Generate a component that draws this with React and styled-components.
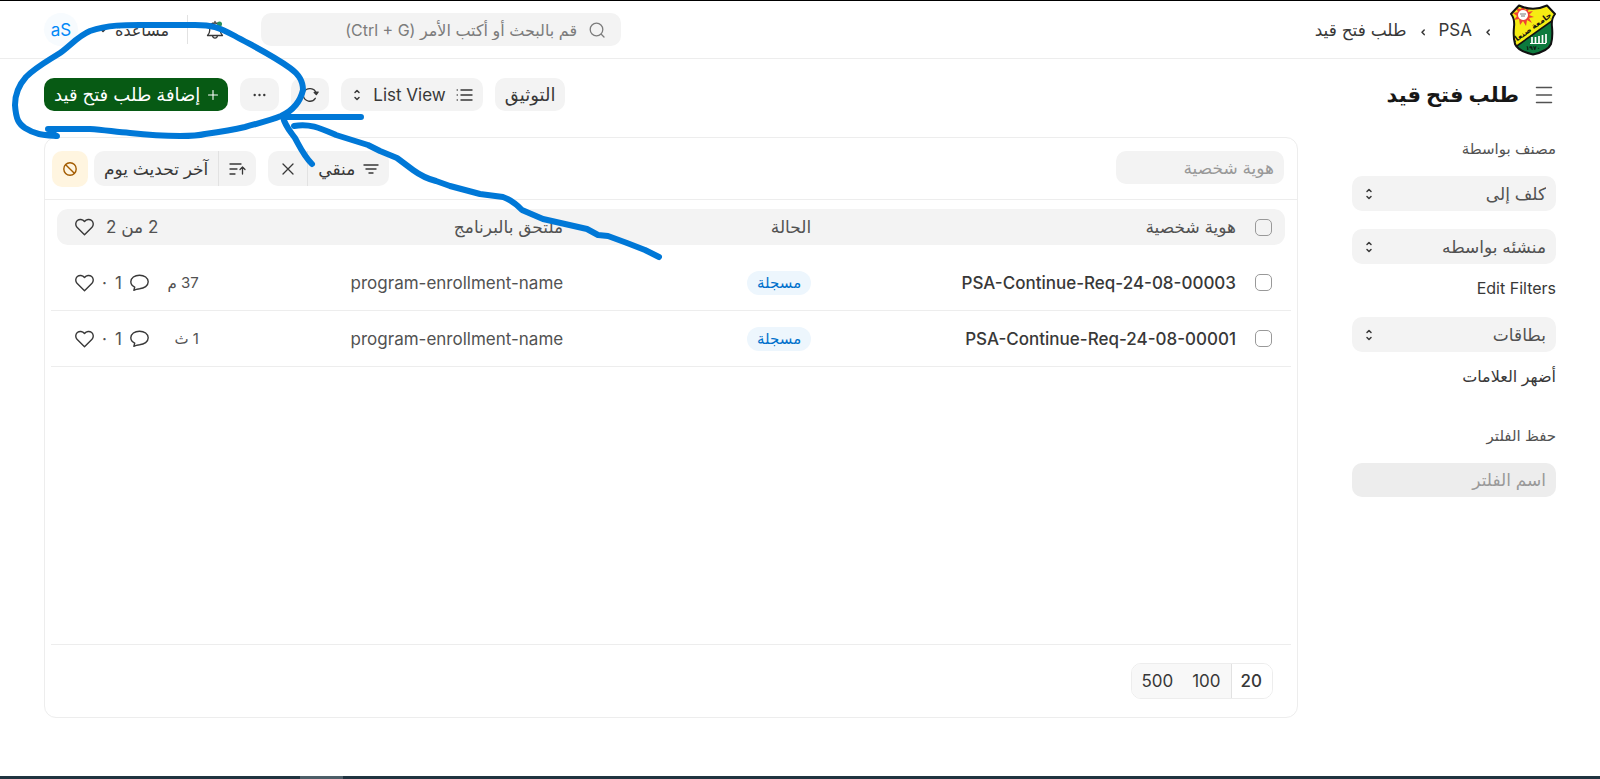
import React from "react";
import styled, { createGlobalStyle } from "styled-components";

const GlobalStyle = createGlobalStyle`
  *, *::before, *::after { box-sizing: border-box; }
  body {
    margin: 0;
    background: #fff;
    color: #383838;
    font-family: Inter, "DejaVu Sans", sans-serif;
    font-size: 17px;
    line-height: 24px;
  }
  button, input, select { font: inherit; color: inherit; }
  a { color: inherit; text-decoration: none; }
`;

const Page = styled.div`
  position: relative;
  min-height: 100vh;
  display: flex;
  flex-direction: column;
  border-top: 1px solid #000;
`;

const Icon = styled.svg`
  width: ${(p) => p.$w || 18}px;
  height: ${(p) => p.$h || p.$w || 18}px;
  flex: none;
  display: block;
  fill: none;
  stroke: currentColor;
  stroke-width: ${(p) => p.$stroke || 1.3};
  stroke-linecap: round;
  stroke-linejoin: round;
`;

/* ---------- top bar ---------- */

const TopBar = styled.header`
  height: 58px;
  padding: 0 44px;
  display: flex;
  align-items: center;
  justify-content: space-between;
  border-bottom: 1px solid #ededed;
`;

const Crumbs = styled.nav`
  display: flex;
  align-items: center;
  gap: 14px;
`;

const HomeLink = styled.a`
  display: flex;
  margin-inline-end: 6px;
`;

const CrumbText = styled.a`
  color: #383838;
`;

const TopTools = styled.div`
  display: flex;
  align-items: center;
`;

const SearchBox = styled.label`
  width: 360px;
  height: 33px;
  padding: 0 16px;
  display: flex;
  align-items: center;
  gap: 12px;
  border-radius: 10px;
  background: #f3f3f3;
  color: #7c7c7c;
  input {
    flex: 1;
    min-width: 0;
    padding: 0;
    border: 0;
    outline: 0;
    background: none;
    font-size: 16px;
  }
  input::placeholder { color: #7c7c7c; opacity: 1; }
`;

const PlainButton = styled.button`
  padding: 0;
  border: 0;
  background: none;
  display: flex;
  align-items: center;
  gap: 8px;
  font-size: 16px;
  cursor: pointer;
`;

const BellButton = styled(PlainButton)`
  margin-inline-start: 37px;
`;

const Separator = styled.span`
  width: 1px;
  height: 29px;
  margin: 0 18px;
  background: #e2e2e2;
`;

const Avatar = styled.button`
  width: 34px;
  height: 33px;
  margin-inline-start: 21px;
  padding: 0;
  border: 0;
  border-radius: 50%;
  background: #f7fbfe;
  color: #0289f7;
  font-size: 17px;
  cursor: pointer;
`;

/* ---------- page head ---------- */

const PageHead = styled.div`
  padding: 19px 44px 26px;
  display: flex;
  align-items: center;
  justify-content: space-between;
`;

const TitleGroup = styled.div`
  display: flex;
  align-items: center;
  gap: 16px;
  padding-inline-start: 3px;
`;

const Title = styled.h1`
  margin: 0;
  font-size: 21px;
  line-height: 32px;
  font-weight: 700;
  color: #171717;
`;

const Actions = styled.div`
  display: flex;
  gap: 12px;
`;

const Button = styled.button`
  height: ${(p) => p.$height || 33}px;
  min-width: ${(p) => p.$min || 0}px;
  padding: 0 10px;
  display: flex;
  align-items: center;
  justify-content: center;
  gap: ${(p) => p.$gap || 10}px;
  border: 0;
  border-radius: 10px;
  background: ${(p) => (p.$tone === "primary" ? "#075a14" : p.$tone === "amber" ? "#fff5e0" : "#f3f3f3")};
  color: ${(p) => (p.$tone === "primary" ? "#fff" : p.$tone === "amber" ? "#a35c00" : "#383838")};
  font-size: ${(p) => (p.$large ? 18 : 17)}px;
  white-space: nowrap;
  cursor: pointer;
`;

/* ---------- body ---------- */

const Body = styled.div`
  flex: 1;
  padding: 0 44px;
  display: flex;
  align-items: flex-start;
  gap: 54px;
`;

const Sidebar = styled.aside`
  flex: none;
  width: 204px;
  display: flex;
  flex-direction: column;
`;

const SideLabel = styled.label`
  font-size: 15px;
  color: #525252;
  margin-bottom: 15px;
`;

const SelectBox = styled.div`
  display: flex;
  align-items: center;
  margin-bottom: ${(p) => p.$gap || 12}px;
  border-radius: 10px;
  background: #f3f3f3;
  select {
    flex: 1;
    width: 100%;
    height: 35px;
    padding: 0 10px;
    border: 0;
    border-radius: 10px;
    background: none;
    appearance: none;
    color: #525252;
  }
  svg { margin-inline: -26px 13px; pointer-events: none; }
`;

const SideLink = styled.a`
  font-size: 16px;
  margin-bottom: ${(p) => p.$gap}px;
`;

const Field = styled.input`
  width: ${(p) => p.$width || "100%"};
  height: ${(p) => p.$height || 33}px;
  padding: 0 10px;
  border: 0;
  border-radius: 10px;
  background: ${(p) => p.$bg || "#f3f3f3"};
  &::placeholder { color: #999; opacity: 1; }
`;

const Card = styled.main`
  flex: 1;
  min-width: 0;
  display: flex;
  flex-direction: column;
  border: 1px solid #ededed;
  border-radius: 12px;
`;

const FilterBar = styled.div`
  padding: 13px 13px 12px 7px;
  display: flex;
  align-items: flex-start;
  justify-content: space-between;
  border-bottom: 1px solid #ededed;
`;

const FilterTools = styled.div`
  display: flex;
  align-items: flex-start;
`;

const Split = styled.div`
  display: flex;
  margin-inline-end: ${(p) => p.$gap}px;
  button:first-child { border-start-end-radius: 0; border-end-end-radius: 0; }
  button:last-child {
    border-start-start-radius: 0;
    border-end-start-radius: 0;
    border-inline-start: 1px solid #e2e2e2;
  }
`;

const List = styled.div`
  min-height: 436px;
  margin: 9px 6px 0;
  border-bottom: 1px solid #ededed;
`;

const Table = styled.table`
  width: 100%;
  table-layout: fixed;
  border-collapse: separate;
  border-spacing: 0;
  th, td { padding: 0; text-align: start; vertical-align: middle; }
`;

const HeadCell = styled.th`
  height: 36px;
  font-weight: 400;
  color: #525252;
  background: #f3f3f3;
  background-clip: padding-box;
  &:first-child {
    border-inline-start: 6px solid transparent;
    border-start-start-radius: 17px 11px;
    border-end-start-radius: 17px 11px;
  }
  &:last-child {
    border-inline-end: 6px solid transparent;
    border-start-end-radius: 17px 11px;
    border-end-end-radius: 17px 11px;
  }
`;

const Spacer = styled.tr`
  height: 10px;
`;

const Cell = styled.td`
  height: 56px;
  border-bottom: 1px solid #ededed;
  font-weight: ${(p) => (p.$strong ? 500 : 400)};
  color: ${(p) => (p.$strong ? "#383838" : "#525252")};
  white-space: nowrap;
`;

const Check = styled.input.attrs({ type: "checkbox" })`
  appearance: none;
  display: block;
  width: 17px;
  height: 17px;
  margin: 0;
  margin-inline-start: ${(p) => p.$indent}px;
  border: 1px solid #999;
  border-radius: 5px;
  background: #fff0;
  &:checked { background: #383838; }
`;

const Pill = styled.span`
  display: inline-block;
  padding: 0 10px;
  border-radius: 12px;
  background: #edf6fd;
  color: #0070cc;
  font-size: 15px;
`;

const Activity = styled.div`
  padding-inline-end: ${(p) => p.$end}px;
  display: flex;
  align-items: center;
  justify-content: flex-end;
  gap: ${(p) => p.$gap}px;
  color: #525252;
  svg { color: #383838; }
`;

const Age = styled.time`
  min-width: 32px;
  margin-inline-end: 10px;
  font-size: 15px;
`;

const Footer = styled.div`
  padding: 18px 24px;
  display: flex;
`;

const Pager = styled.div`
  display: flex;
  border: 1px solid #ededed;
  border-radius: 10px;
  overflow: hidden;
`;

const PageSize = styled.button`
  height: 34px;
  padding: 0 10px 0 9px;
  border: 0;
  border-inline-end: ${(p) => (p.$active ? "1px solid #e2e2e2" : "0")};
  background: ${(p) => (p.$active ? "#fff" : "#f8f8f8")};
  font-weight: ${(p) => (p.$active ? 500 : 400)};
  cursor: pointer;
`;

const Dock = styled.div`
  height: 3px;
  display: flex;
  justify-content: flex-end;
  background: #203440;
`;

const DockItem = styled.span`
  width: 43px;
  margin-inline-end: 300px;
  background: #4d5e68;
`;

const Ink = styled.svg`
  position: absolute;
  top: -1px;
  left: 0;
  width: 680px;
  height: 270px;
  pointer-events: none;
  fill: none;
  stroke: #0078d7;
  stroke-width: 6;
  stroke-linecap: round;
  stroke-linejoin: round;
`;

/* ---------- icons ---------- */

const SHIELD =
  "M9 1.500 Q23 8 37 1.500 L45 10 Q41 15 42 23 Q43 33 41 40 Q38 47 23 50.500 Q8 47 5 40 Q3 33 4 23 Q5 15 1 10 Z";

const Logo = () => (
  <svg width="46" height="52" viewBox="0 0 46 52" role="img" aria-label="جامعة صنعاء">
    <defs>
      <clipPath id="shield"><path d={SHIELD} /></clipPath>
    </defs>
    <g clipPath="url(#shield)">
      <rect width="46" height="52" fill="#f6ec13" />
      <path d="M46 14 L4 44 L10 52 H46 Z" fill="#0d7a3e" />
      <path d="M46 14 L4 44" stroke="#111" strokeWidth="1.600" />
      <path d="M13 1l2 5 4-3-1 5 5-1-4 4 5 2-5 1 3 5-5-3-1 6-3-5-3 4-1-6-5 1 3-4-4-3 5-1-2-4 5 1z" fill="#ee4035" />
      <circle cx="13" cy="11" r="5" fill="#fff" />
      <path d="M10 10h6M11 12h4" stroke="#777" strokeWidth="1" />
      <text x="23" y="26" fontSize="8" fontWeight="700" fill="#111" textAnchor="middle" transform="rotate(-36 23 26)">جامعة صنعاء</text>
      <path d="M22 33v6M25.500 33v6M29 32v7M32.500 31v8M36 30v9" stroke="#fff" strokeWidth="1.700" />
      <path d="M20 39.500h16" stroke="#fff" strokeWidth="1" />
      <text x="23" y="46" fontSize="6" fontWeight="700" fill="#111" textAnchor="middle">١٩٧٠</text>
    </g>
    <path d={SHIELD} fill="none" stroke="#111" strokeWidth="2" strokeLinejoin="round" />
  </svg>
);

const CrumbArrow = () => (
  <Icon $w={4} $h={12} $stroke={1.5} viewBox="0 0 4 12"><path d="M3.200 6 1 8.300 3.200 10.600" /></Icon>
);
const UpDown = () => (
  <Icon $w={8} $h={12} $stroke={1.5} viewBox="0 0 8 12"><path d="M2 3.500 4 1.500l2 2M2 8.500l2 2 2-2" /></Icon>
);
const Heart = () => (
  <Icon $w={19} $h={18} $stroke={1.400} viewBox="0 0 19 18">
    <path d="M9.500 16.700 2 9.200C.2 7.200.4 4.200 2.300 2.500 4.300 1 7.600 1 9.500 3.500 11.400 1 14.700 1 16.700 2.500c1.900 1.700 2.100 4.700.3 6.700z" />
  </Icon>
);
const Comment = () => (
  <Icon $w={19} $h={18} $stroke={1.400} viewBox="0 0 19 18">
    <path d="M9.500 1.200c4.800 0 8.700 2.700 8.700 6.600s-3.900 6.700-8.700 6.900c-1.500 0-3 .8-5.600 1.500l.8-3C2.300 12 .8 10.200.8 7.800c0-3.900 3.900-6.600 8.700-6.600z" />
  </Icon>
);

const rows = [
  { id: "PSA-Continue-Req-24-08-00003", status: "مسجلة", program: "program-enrollment-name", age: "37 م", comments: 1 },
  { id: "PSA-Continue-Req-24-08-00001", status: "مسجلة", program: "program-enrollment-name", age: "1 ث", comments: 1 },
];

const SideSelect = ({ label, gap }) => (
  <SelectBox $gap={gap}>
    <select aria-label={label} defaultValue="">
      <option value="">{label}</option>
    </select>
    <UpDown />
  </SelectBox>
);

export default function App() {
  return (
    <Page dir="rtl" lang="ar">
      <GlobalStyle />
      <TopBar>
        <Crumbs aria-label="مسار التنقل">
          <HomeLink href="#home"><Logo /></HomeLink>
          <CrumbArrow />
          <CrumbText href="#psa">PSA</CrumbText>
          <CrumbArrow />
          <CrumbText href="#list">طلب فتح قيد</CrumbText>
        </Crumbs>
        <TopTools>
          <SearchBox>
            <Icon $w={16} viewBox="0 0 16 16"><circle cx="7.500" cy="7.500" r="6.300" /><path d="m12.500 12.500 2.500 2.500" /></Icon>
            <input aria-label="بحث" placeholder="قم بالبحث أو أكتب الأمر (Ctrl + G)" />
          </SearchBox>
          <BellButton aria-label="الإشعارات">
            <Icon $w={18} $h={20} viewBox="0 0 18 20">
              <path d="M1.500 15.500h15c-1.500-1.500-2.200-2.700-2.200-5V8c0-3-2.200-5-5.300-5S3.700 5 3.700 8v2.500c0 2.300-.7 3.500-2.200 5zM9 3V1.500M6.500 15.500c.3 3.400 4.700 3.400 5 0" />
              <circle cx="13.500" cy="4" r="2.500" fill="#278f5e" stroke="none" />
            </Icon>
          </BellButton>
          <Separator />
          <PlainButton>
            مساعدة
            <Icon $w={8} $h={6} $stroke={1.500} viewBox="0 0 8 6"><path d="M1 1.500 4 4.500l3-3" /></Icon>
          </PlainButton>
          <Avatar>aS</Avatar>
        </TopTools>
      </TopBar>

      <PageHead>
        <TitleGroup>
          <PlainButton aria-label="القائمة الجانبية">
            <Icon $w={18} $stroke={1.500} viewBox="0 0 18 18" color="#525252"><path d="M1.500 1.500h15M1.500 9h15M1.500 16.500h15" /></Icon>
          </PlainButton>
          <Title>طلب فتح قيد</Title>
        </TitleGroup>
        <Actions>
          <Button $large>التوثيق</Button>
          <Button>
            <Icon $w={17} $h={14} $stroke={1.400} viewBox="0 0 17 14"><path d="M5 2h11M5 7h11M5 12h11M1.200 2h.1M1.200 7h.1M1.200 12h.1" /></Icon>
            List View
            <Icon $w={12} $h={12} $stroke={1.500} viewBox="0 0 12 12"><path d="M4 3.500 6 1.500l2 2M4 8.500l2 2 2-2" /></Icon>
          </Button>
          <Button $min={38} aria-label="تحديث">
            <Icon $w={18} $h={16} viewBox="0 0 18 16">
              <path d="M15.300 6.500A6.600 6.600 0 0 0 3 5.200M2.300 8.500a6.600 6.600 0 0 0 12 2.800" />
              <path d="M13.200 5.500 15.300 7.500l1.800-2.400z" fill="currentColor" />
            </Icon>
          </Button>
          <Button $min={39} aria-label="المزيد">
            <Icon $w={13} $h={4} viewBox="0 0 13 4"><g fill="currentColor" stroke="none"><circle cx="1.700" cy="2" r="1.200" /><circle cx="6.500" cy="2" r="1.200" /><circle cx="11.300" cy="2" r="1.200" /></g></Icon>
          </Button>
          <Button $tone="primary" $large $gap={8}>
            <Icon $w={10} $stroke={1.100} viewBox="0 0 10 10"><path d="M5 .5v9M.5 5h9" /></Icon>
            إضافة طلب فتح قيد
          </Button>
        </Actions>
      </PageHead>

      <Body>
        <Sidebar>
          <SideLabel as="div">مصنف بواسطة</SideLabel>
          <SideSelect label="كلف إلى" gap={18} />
          <SideSelect label="منشئه بواسطه" />
          <SideLink href="#filters" $gap={17}>Edit Filters</SideLink>
          <SideSelect label="بطاقات" />
          <SideLink href="#tags" $gap={36}>أضهر العلامات</SideLink>
          <SideLabel htmlFor="filter-name">حفظ الفلتر</SideLabel>
          <Field id="filter-name" $height={34} $bg="#ededed" placeholder="اسم الفلتر" />
        </Sidebar>

        <Card>
          <FilterBar>
            <Field $width="168px" aria-label="هوية شخصية" placeholder="هوية شخصية" />
            <FilterTools>
              <Split $gap={12}>
                <Button $height={35} $gap={8}>
                  <Icon $w={16} $h={10} viewBox="0 0 16 10" $stroke={1.400}><path d="M1 1h14M3 5h10M6 9h4" /></Icon>
                  منقي
                </Button>
                <Button $height={35} $min={40} aria-label="مسح">
                  <Icon $w={12} viewBox="0 0 12 12"><path d="m1 1 10 10M11 1 1 11" /></Icon>
                </Button>
              </Split>
              <Split $gap={6}>
                <Button $height={35} $min={37} aria-label="اتجاه الترتيب">
                  <Icon $w={17} $h={12} viewBox="0 0 17 12"><path d="M1 1h11M1 6h7M1 11h5M13.500 11V4M11 6.500 13.500 4 16 6.500" /></Icon>
                </Button>
                <Button $height={35}>آخر تحديث يوم</Button>
              </Split>
              <Button $height={36} $min={36} $tone="amber" aria-label="إيقاف">
                <Icon $w={14} viewBox="0 0 14 14" $stroke={1.400}><circle cx="7" cy="7" r="6.200" /><path d="m2.700 2.700 8.600 8.600" /></Icon>
              </Button>
            </FilterTools>
          </FilterBar>

          <List>
            <Table>
              <colgroup>
                <col style={{ width: 55 }} />
                <col />
                <col style={{ width: "20%" }} />
                <col style={{ width: "28%" }} />
                <col style={{ width: 165 }} />
              </colgroup>
              <thead>
                <tr>
                  <HeadCell><Check $indent={13} aria-label="تحديد الكل" /></HeadCell>
                  <HeadCell>هوية شخصية</HeadCell>
                  <HeadCell>الحالة</HeadCell>
                  <HeadCell>ملتحق بالبرنامج</HeadCell>
                  <HeadCell>
                    <Activity $end={18} $gap={12}>2 من 2 <Heart /></Activity>
                  </HeadCell>
                </tr>
              </thead>
              <tbody>
                <Spacer aria-hidden="true" />
                {rows.map((r) => (
                  <tr key={r.id}>
                    <Cell><Check $indent={19} aria-label={r.id} /></Cell>
                    <Cell $strong><a href={"#" + r.id}>{r.id}</a></Cell>
                    <Cell><Pill>{r.status}</Pill></Cell>
                    <Cell>{r.program}</Cell>
                    <Cell>
                      <Activity $end={24} $gap={8}>
                        <Age>{r.age}</Age>
                        <Comment />
                        <span>{r.comments}</span>
                        <span>·</span>
                        <Heart />
                      </Activity>
                    </Cell>
                  </tr>
                ))}
              </tbody>
            </Table>
          </List>

          <Footer>
            <Pager>
              <PageSize $active>20</PageSize>
              <PageSize>100</PageSize>
              <PageSize>500</PageSize>
            </Pager>
          </Footer>
        </Card>
      </Body>

      <Dock><DockItem /></Dock>

      <Ink viewBox="0 0 680 270" aria-hidden="true">
        <path d="M48 129C62 129 76 129 90 129C105 130 116 132 130 133C148 135 162 136 180 136C190 136 197 136 205 134C219 132 232 130 245 127C260 123 271 120 281 116C292 111 300 103 303 90C303 79 297 73 290 68C272 55 253 46 235 36C218 27 212 25 195 25L150 25C130 25 110 24 90 31C78 36 70 46 60 53C46 62 36 67 26 77C18 86 15 94 15 105C16 120 19 124 25 128C36 135 44 135 57 136L50 132" />
        <path d="M361 117H283C285 126 290 131 295 138C301 149 304 156 312 164" />
        <path d="M294 126C309 123 320 128 336 135L368 145L380 151L397 158L413 170Q424 178 436 181L450 186L480 194L503 197Q512 200 522 210L543 219L587 229L598 235L608 236L627 243L645 250L659 257" />
      </Ink>
    </Page>
  );
}
